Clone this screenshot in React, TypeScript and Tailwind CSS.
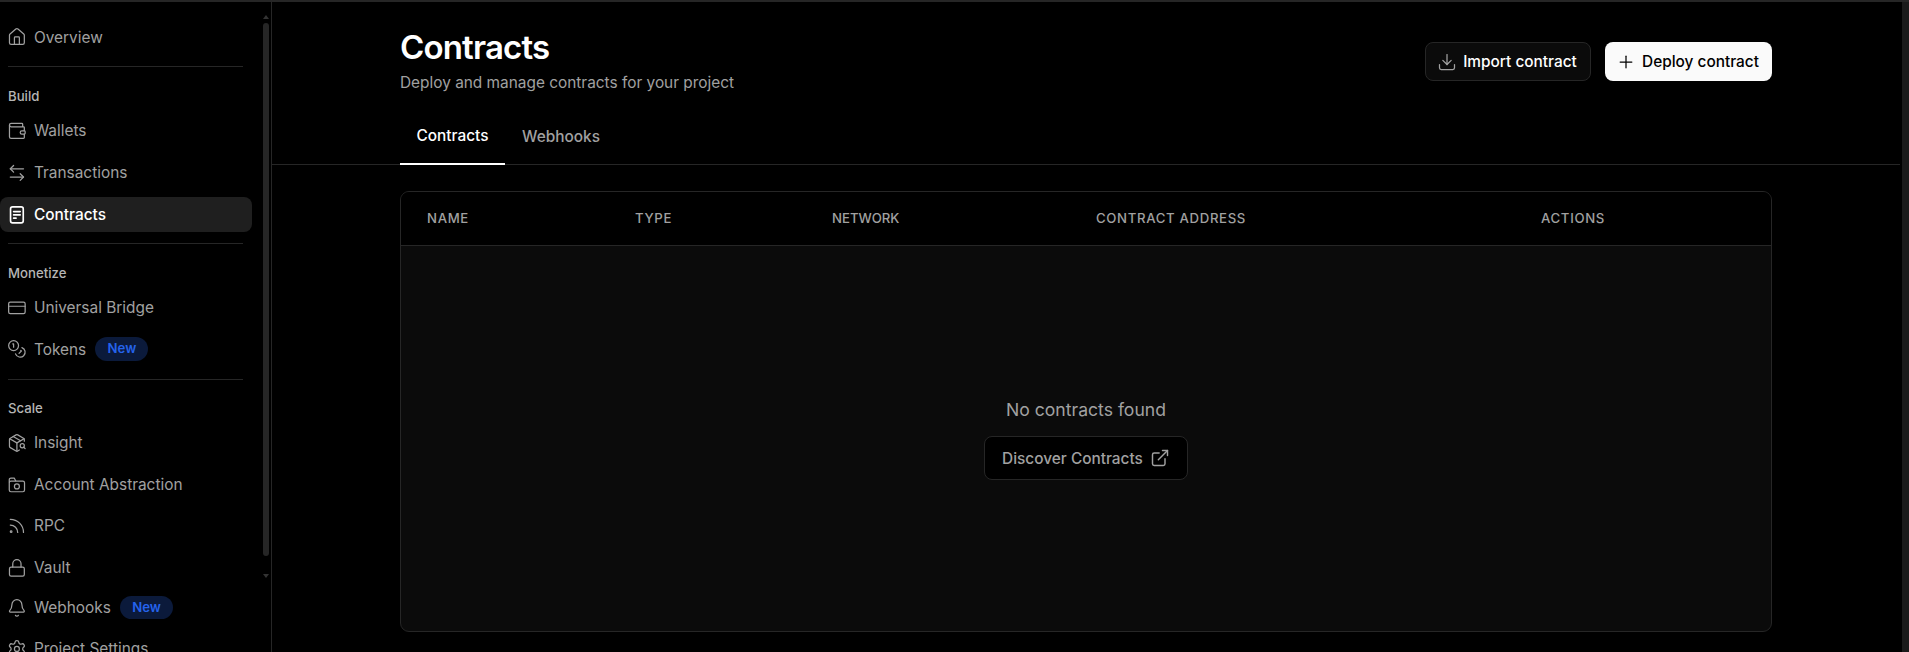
import { ReactNode } from "react";
import {
  ArrowLeftRight,
  Bell,
  Coins,
  CreditCard,
  Download,
  ExternalLink,
  House,
  Lock,
  PackageSearch,
  Plus,
  Rss,
  Settings,
  Wallet,
} from "lucide-react";

const iconProps = { size: 19.8, strokeWidth: 1.5, className: "shrink-0" };

function ContractIcon() {
  return (
    <svg width="19.8" height="19.8" viewBox="0 0 24 24" fill="none" stroke="currentColor" strokeWidth="2" strokeLinecap="round" className="shrink-0">
      <rect x="4.3" y="2.3" width="15.4" height="19.4" rx="2.5" />
      <path d="M8 8h8M8 12h8M8 16h3" />
    </svg>
  );
}

function FolderIcon() {
  return (
    <svg width="19.8" height="19.8" viewBox="0 0 24 24" fill="none" stroke="currentColor" strokeWidth="1.5" strokeLinejoin="round" className="shrink-0">
      <path d="M2.75 9V5.7a2 2 0 0 1 2-2h4l2 3.8" />
      <rect x="2.75" y="7.5" width="18.5" height="12.8" rx="2" />
      <circle cx="12" cy="13.9" r="3" />
    </svg>
  );
}

function Divider() {
  return <div className="mt-[5.5px] mb-[11.25px] ml-2 mr-[17px] h-px shrink-0 bg-[#262626]" />;
}

function SectionTitle({ children }: { children: ReactNode }) {
  return <p className="h-[22px] shrink-0 pl-2 text-[13.2px] font-medium leading-[22px] text-[#b5b5b5]">{children}</p>;
}

function NewBadge() {
  return (
    <span className="ml-[2px] flex h-[23.5px] w-[53px] items-center justify-center rounded-full bg-[#0b1a3b] text-[13.2px] font-semibold text-[#2563eb]">
      New
    </span>
  );
}

function NavItem({ icon, label, active, badge, className }: { icon: ReactNode; label: string; active?: boolean; badge?: boolean; className?: string }) {
  return (
    <a
      className={
        "flex h-[35.2px] w-[252px] shrink-0 items-center gap-[7.2px] rounded-lg pl-[7px] text-[15.4px] " +
        (active ? "bg-[#1f1f1f] font-medium text-white " : "text-[#a1a1a1] ") +
        (className ?? "")
      }
    >
      {icon}
      <span>{label}</span>
      {badge && <NewBadge />}
    </a>
  );
}

function Sidebar() {
  return (
    <aside className="flex h-full w-[272px] shrink-0 overflow-hidden border-r border-[#262626]">
      <nav className="flex w-[260px] shrink-0 flex-col gap-[6.3px] pt-[17.5px]">
        <NavItem icon={<House {...iconProps} />} label="Overview" />
        <Divider />
        <SectionTitle>Build</SectionTitle>
        <NavItem icon={<Wallet {...iconProps} />} label="Wallets" />
        <NavItem icon={<ArrowLeftRight {...iconProps} />} label="Transactions" className="mb-[0.6px]" />
        <NavItem icon={<ContractIcon />} label="Contracts" active className="mb-[-0.6px]" />
        <Divider />
        <SectionTitle>Monetize</SectionTitle>
        <NavItem icon={<CreditCard {...iconProps} />} label="Universal Bridge" />
        <NavItem icon={<Coins {...iconProps} />} label="Tokens" badge />
        <Divider />
        <SectionTitle>Scale</SectionTitle>
        <NavItem icon={<PackageSearch {...iconProps} />} label="Insight" />
        <NavItem icon={<FolderIcon />} label="Account Abstraction" />
        <NavItem icon={<Rss {...iconProps} />} label="RPC" />
        <NavItem icon={<Lock {...iconProps} />} label="Vault" className="mb-[-1.5px]" />
        <NavItem icon={<Bell {...iconProps} />} label="Webhooks" badge />
        <NavItem icon={<Settings {...iconProps} />} label="Project Settings" />
      </nav>
      <div className="ml-[3px] flex w-[6px] flex-col items-center pt-[13px]">
        <div className="h-0 w-0 border-x-[3px] border-b-[4px] border-x-transparent border-b-[#333333]" />
        <div className="mt-[4px] h-[533px] w-[6px] shrink-0 rounded-full bg-[#262626]" />
        <div className="mt-[18px] h-0 w-0 border-x-[3px] border-t-[4px] border-x-transparent border-t-[#333333]" />
      </div>
    </aside>
  );
}

const columns = ["NAME", "TYPE", "NETWORK", "CONTRACT ADDRESS", "ACTIONS"];

function ContractsTable() {
  return (
    <div className="ml-[128px] mt-[26px] flex h-[441px] w-[1372px] flex-col overflow-hidden rounded-[9px] border border-[#262626] bg-[#0b0b0b]">
      <div className="grid h-[54px] shrink-0 grid-cols-[208px_197px_264px_445px_1fr] items-center border-b border-[#262626] bg-black pl-[26px] text-[13.2px] font-medium tracking-[0.66px] text-[#a1a1a1]">
        {columns.map((col) => (
          <span key={col} className={col === "NETWORK" ? "tracking-normal" : ""}>
            {col}
          </span>
        ))}
      </div>
      <div className="flex flex-1 flex-col items-center justify-center gap-3">
        <p className="text-[17.6px] leading-7 text-[#a1a1a1]">No contracts found</p>
        <button className="flex h-[44px] w-[204px] items-center justify-center gap-[7px] rounded-lg border border-[#262626] bg-black text-[15.4px] font-medium text-[#a1a1a1]">
          Discover Contracts
          <ExternalLink size={20} strokeWidth={1.75} />
        </button>
      </div>
    </div>
  );
}

export default function App() {
  return (
    <div className="flex h-[652px] w-[1909px] overflow-hidden border-t-2 border-[#262626] bg-black font-['Inter',sans-serif]">
      <Sidebar />
      <main className="flex min-w-0 flex-1 flex-col">
        <div className="flex items-start justify-between pl-[128px] pr-[130px] pt-[26px]">
          <div>
            <h1 className="text-[33px] font-semibold leading-[39.6px] tracking-tight text-white">Contracts</h1>
            <p className="mt-[3.4px] text-[15.4px] leading-6 text-[#a1a1a1]">Deploy and manage contracts for your project</p>
          </div>
          <div className="mt-[14px] flex gap-[14px]">
            <button className="flex h-[39px] w-[166px] items-center justify-center gap-[6px] rounded-lg border border-[#262626] bg-[#0b0b0b] pr-[2px] text-[15.4px] font-medium text-white">
              <Download size={20} strokeWidth={1.5} className="text-[#a1a1a1]" />
              Import contract
            </button>
            <button className="flex h-[39px] w-[167px] items-center justify-center gap-[6px] rounded-lg bg-[#fafafa] pr-[2px] text-[15.4px] font-medium text-black">
              <Plus size={20} strokeWidth={1.5} />
              Deploy contract
            </button>
          </div>
        </div>
        <div className="mr-[2px] mt-[10px] flex h-[60px] border-b border-[#262626] pl-[128px] text-[15.4px] font-medium">
          <span className="flex h-[60px] w-[105px] shrink-0 items-center justify-center border-b-2 border-white pt-[3px] text-white">Contracts</span>
          <span className="ml-[8.5px] flex h-[60px] w-[95px] shrink-0 items-center justify-center pt-[3px] text-[#a1a1a1]">Webhooks</span>
        </div>
        <ContractsTable />
      </main>
      <div className="w-[7px] shrink-0 bg-[#1a1a1a]" />
    </div>
  );
}
